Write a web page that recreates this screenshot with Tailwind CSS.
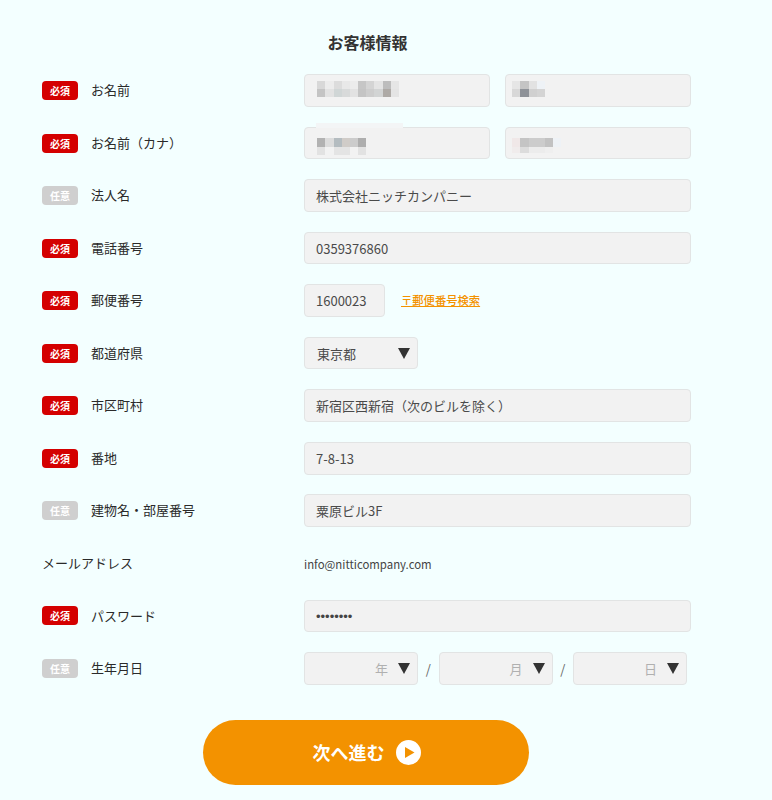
<!DOCTYPE html>
<html lang="ja">
<head>
    <meta charset="UTF-8">
    <meta name="viewport" content="width=device-width, initial-scale=1.0">
    <title>お客様情報</title>
    <script src="https://cdn.jsdelivr.net/npm/@tailwindcss/browser@4"></script>
</head>
<body class="bg-[#f3ffff] font-['Noto_Sans_CJK_JP','Noto_Sans',sans-serif] text-[#333] overflow-hidden">
    <div class="w-[772px] h-[800px] px-[42px] pt-[31px]">
        <h2 class="h-[22px] mb-[21.2px] text-center text-[16px] leading-[22px] font-bold text-[#333] pr-[37px]">お客様情報</h2>

        <div class="flex flex-col gap-[19.95px]">
            <!-- お名前 -->
            <div class="flex items-center h-[32.6px]">
                <span class="w-[36px] h-[19px] rounded-[4px] bg-[#d40000] text-white text-[10px] font-bold leading-[19px] text-center">必須</span>
                <span class="w-[226px] pl-[13px] mb-[1px] text-[13px] text-[#2a2a2a]">お名前</span>
                <div class="relative w-[186px] h-[32.6px] rounded-[4px] border border-[#e2e4e4] bg-[#f2f2f2]">
                    <!-- blurred value -->
                    <div class="absolute left-[12.3px] top-[6px] grid grid-cols-[repeat(10,8.17px)] grid-rows-[8px_8px]">
                        <i class="bg-[#d8d8d8]"></i><i class="bg-[#ececec]"></i><i class="bg-[#dcdcdc]"></i><i class="bg-[#e8e8e8]"></i><i class="bg-[#ececec]"></i><i class="bg-[#c6c6c6]"></i><i class="bg-[#d4d4d4]"></i><i class="bg-[#e4e4e4]"></i><i class="bg-[#bdbdbd]"></i><i class="bg-[#e6e6e6]"></i>
                        <i class="bg-[#c4c4c4]"></i><i class="bg-[#e2e2e2]"></i><i class="bg-[#d0d6d6]"></i><i class="bg-[#d8dada]"></i><i class="bg-[#e2e2e2]"></i><i class="bg-[#c4c4c4]"></i><i class="bg-[#cdcdcd]"></i><i class="bg-[#d2d4d4]"></i><i class="bg-[#aeaaa6]"></i><i class="bg-[#e4e4e4]"></i>
                    </div>
                </div>
                <div class="relative w-[186px] h-[32.6px] ml-[15px] rounded-[4px] border border-[#e2e4e4] bg-[#f2f2f2]">
                    <div class="absolute left-[6.3px] top-[6px] grid grid-cols-[repeat(4,8.17px)] grid-rows-[8px_8px]">
                        <i class="bg-[#e6e6e6]"></i><i class="bg-[#c4c4c4]"></i><i class="bg-[#e2e2e2]"></i><i class="bg-[#eef2f6]"></i>
                        <i class="bg-[#d8d8d8]"></i><i class="bg-[#8e9298]"></i><i class="bg-[#d0d0d0]"></i><i class="bg-[#d4d4d4]"></i>
                    </div>
                </div>
            </div>
            <!-- カナ -->
            <div class="flex items-center h-[32.6px]">
                <span class="w-[36px] h-[19px] rounded-[4px] bg-[#d40000] text-white text-[10px] font-bold leading-[19px] text-center">必須</span>
                <span class="w-[226px] pl-[13px] mb-[1px] text-[13px] text-[#2a2a2a]">お名前（カナ）</span>
                <div class="relative w-[186px] h-[32.6px] rounded-[4px] border border-[#e2e4e4] bg-[#f2f2f2]">
                    <div class="absolute left-[11px] top-[-5px] w-[87px] h-[5px] bg-[#f3f5f6]"></div>
                    <div class="absolute left-[12.3px] top-[10px] grid grid-cols-[repeat(6,8.17px)] grid-rows-[9px_8px]">
                        <i class="bg-[#b2b2b2]"></i><i class="bg-[#dcdcdc]"></i><i class="bg-[#b4bcc0]"></i><i class="bg-[#d0ccc8]"></i><i class="bg-[#cccccc]"></i><i class="bg-[#aeaeae]"></i>
                        <i class="bg-[#e2e2e2]"></i><i class="bg-[#f2f2f2]"></i><i class="bg-[#e4e4e4]"></i><i class="bg-[#e4e4e4]"></i><i class="bg-[#f2f2f2]"></i><i class="bg-[#e2e2e2]"></i>
                    </div>
                </div>
                <div class="relative w-[186px] h-[32.6px] ml-[15px] rounded-[4px] border border-[#e2e4e4] bg-[#f2f2f2]">
                    <div class="absolute left-[6.3px] top-[10px] grid grid-cols-[repeat(6,8.17px)] grid-rows-[9px_6px]">
                        <i class="bg-[#f0e8e8]"></i><i class="bg-[#c4c4c4]"></i><i class="bg-[#cccccc]"></i><i class="bg-[#cccccc]"></i><i class="bg-[#c2c2c2]"></i><i class="bg-[#eef2f6]"></i>
                        <i class="bg-[#f0ecec]"></i><i class="bg-[#dcdcdc]"></i><i class="bg-[#ececec]"></i><i class="bg-[#ececec]"></i><i class="bg-[#efefef]"></i><i class="bg-[#f2f2f2]"></i>
                    </div>
                </div>
            </div>
            <!-- 法人名 -->
            <div class="flex items-center h-[32.6px]">
                <span class="w-[36px] h-[19px] rounded-[4px] bg-[#cfcfcf] text-white text-[10px] font-bold leading-[19px] text-center">任意</span>
                <span class="w-[226px] pl-[13px] mb-[1px] text-[13px] text-[#2a2a2a]">法人名</span>
                <div class="w-[387px] h-[32.6px] px-[11px] rounded-[4px] border border-[#e2e4e4] bg-[#f2f2f2] text-[13px] leading-[31px] text-[#4a4a4a]">株式会社ニッチカンパニー</div>
            </div>
            <!-- 電話番号 -->
            <div class="flex items-center h-[32.6px]">
                <span class="w-[36px] h-[19px] rounded-[4px] bg-[#d40000] text-white text-[10px] font-bold leading-[19px] text-center">必須</span>
                <span class="w-[226px] pl-[13px] mb-[1px] text-[13px] text-[#2a2a2a]">電話番号</span>
                <div class="w-[387px] h-[32.6px] px-[11px] rounded-[4px] border border-[#e2e4e4] bg-[#f2f2f2] text-[13px] leading-[31px] text-[#4a4a4a]">0359376860</div>
            </div>
            <!-- 郵便番号 -->
            <div class="flex items-center h-[32.6px]">
                <span class="w-[36px] h-[19px] rounded-[4px] bg-[#d40000] text-white text-[10px] font-bold leading-[19px] text-center">必須</span>
                <span class="w-[226px] pl-[13px] mb-[1px] text-[13px] text-[#2a2a2a]">郵便番号</span>
                <div class="w-[81px] h-[32.6px] px-[11px] rounded-[4px] border border-[#e2e4e4] bg-[#f2f2f2] text-[13px] leading-[31px] text-[#4a4a4a]">1600023</div>
                <a class="ml-[16px] text-[11.3px] font-medium text-[#f39200] underline">〒郵便番号検索</a>
            </div>
            <!-- 都道府県 -->
            <div class="flex items-center h-[32.6px]">
                <span class="w-[36px] h-[19px] rounded-[4px] bg-[#d40000] text-white text-[10px] font-bold leading-[19px] text-center">必須</span>
                <span class="w-[226px] pl-[13px] mb-[1px] text-[13px] text-[#2a2a2a]">都道府県</span>
                <div class="relative w-[114px] h-[32.6px] px-[12px] rounded-[4px] border border-[#e2e4e4] bg-[#f2f2f2] text-[13px] leading-[31px] text-[#4a4a4a]">東京都
                    <span class="absolute right-[7px] top-[10px] w-0 h-0 border-x-[6.5px] border-x-transparent border-t-[11px] border-t-[#333]"></span>
                </div>
            </div>
            <!-- 市区町村 -->
            <div class="flex items-center h-[32.6px]">
                <span class="w-[36px] h-[19px] rounded-[4px] bg-[#d40000] text-white text-[10px] font-bold leading-[19px] text-center">必須</span>
                <span class="w-[226px] pl-[13px] mb-[1px] text-[13px] text-[#2a2a2a]">市区町村</span>
                <div class="w-[387px] h-[32.6px] px-[11px] rounded-[4px] border border-[#e2e4e4] bg-[#f2f2f2] text-[13px] leading-[31px] text-[#4a4a4a]">新宿区西新宿（次のビルを除く）</div>
            </div>
            <!-- 番地 -->
            <div class="flex items-center h-[32.6px]">
                <span class="w-[36px] h-[19px] rounded-[4px] bg-[#d40000] text-white text-[10px] font-bold leading-[19px] text-center">必須</span>
                <span class="w-[226px] pl-[13px] mb-[1px] text-[13px] text-[#2a2a2a]">番地</span>
                <div class="w-[387px] h-[32.6px] px-[11px] rounded-[4px] border border-[#e2e4e4] bg-[#f2f2f2] text-[13px] leading-[31px] text-[#4a4a4a]">7-8-13</div>
            </div>
            <!-- 建物名 -->
            <div class="flex items-center h-[32.6px]">
                <span class="w-[36px] h-[19px] rounded-[4px] bg-[#cfcfcf] text-white text-[10px] font-bold leading-[19px] text-center">任意</span>
                <span class="w-[226px] pl-[13px] mb-[1px] text-[13px] text-[#2a2a2a]">建物名・部屋番号</span>
                <div class="w-[387px] h-[32.6px] px-[11px] rounded-[4px] border border-[#e2e4e4] bg-[#f2f2f2] text-[13px] leading-[31px] text-[#4a4a4a]">粟原ビル3F</div>
            </div>
            <!-- メールアドレス -->
            <div class="flex items-center h-[32.6px]">
                <span class="w-[262px] mb-[2px] text-[13px] text-[#2a2a2a]">メールアドレス</span>
                <span class="pt-[3px] text-[11.4px] text-[#444]">info@nitticompany.com</span>
            </div>
            <!-- パスワード -->
            <div class="flex items-center h-[32.6px]">
                <span class="w-[36px] h-[19px] rounded-[4px] bg-[#d40000] text-white text-[10px] font-bold leading-[19px] text-center">必須</span>
                <span class="w-[226px] pl-[13px] mb-[1px] text-[13px] text-[#2a2a2a]">パスワード</span>
                <div class="w-[387px] h-[32.6px] px-[11px] rounded-[4px] border border-[#e2e4e4] bg-[#f2f2f2] text-[13px] leading-[31px] text-[#444] font-['Liberation_Sans',sans-serif]">••••••••</div>
            </div>
            <!-- 生年月日 -->
            <div class="flex items-center h-[32.6px]">
                <span class="w-[36px] h-[19px] rounded-[4px] bg-[#cfcfcf] text-white text-[10px] font-bold leading-[19px] text-center">任意</span>
                <span class="w-[226px] pl-[13px] mb-[1px] text-[13px] text-[#2a2a2a]">生年月日</span>
                <div class="relative w-[114px] h-[32.6px] pr-[29px] text-right rounded-[4px] border border-[#e2e4e4] bg-[#f2f2f2] text-[13px] leading-[31px] text-[#b0b0b0]">年
                    <span class="absolute right-[7px] top-[10px] w-0 h-0 border-x-[6.5px] border-x-transparent border-t-[11px] border-t-[#333]"></span>
                </div>
                <span class="w-[20.5px] text-center text-[13px] text-[#666]">/</span>
                <div class="relative w-[114px] h-[32.6px] pr-[29px] text-right rounded-[4px] border border-[#e2e4e4] bg-[#f2f2f2] text-[13px] leading-[31px] text-[#b0b0b0]">月
                    <span class="absolute right-[7px] top-[10px] w-0 h-0 border-x-[6.5px] border-x-transparent border-t-[11px] border-t-[#333]"></span>
                </div>
                <span class="w-[20.5px] text-center text-[13px] text-[#666]">/</span>
                <div class="relative w-[114px] h-[32.6px] pr-[29px] text-right rounded-[4px] border border-[#e2e4e4] bg-[#f2f2f2] text-[13px] leading-[31px] text-[#b0b0b0]">日
                    <span class="absolute right-[7px] top-[10px] w-0 h-0 border-x-[6.5px] border-x-transparent border-t-[11px] border-t-[#333]"></span>
                </div>
            </div>
        </div>

        <div class="flex justify-center mt-[35px] pr-[40px]">
            <button class="flex items-center justify-center gap-[11px] w-[326px] h-[65px] pl-[1px] rounded-full bg-[#f39200] text-white text-[18px] font-bold">
                次へ進む
                <svg class="w-[25px] h-[25px]" viewBox="0 0 25 25"><circle cx="12.5" cy="12.5" r="12.5" fill="#fff"/><path d="M9 7 L18.5 12.5 L9 18 Z" fill="#f39200"/></svg>
            </button>
        </div>
    </div>
</body>
</html>
